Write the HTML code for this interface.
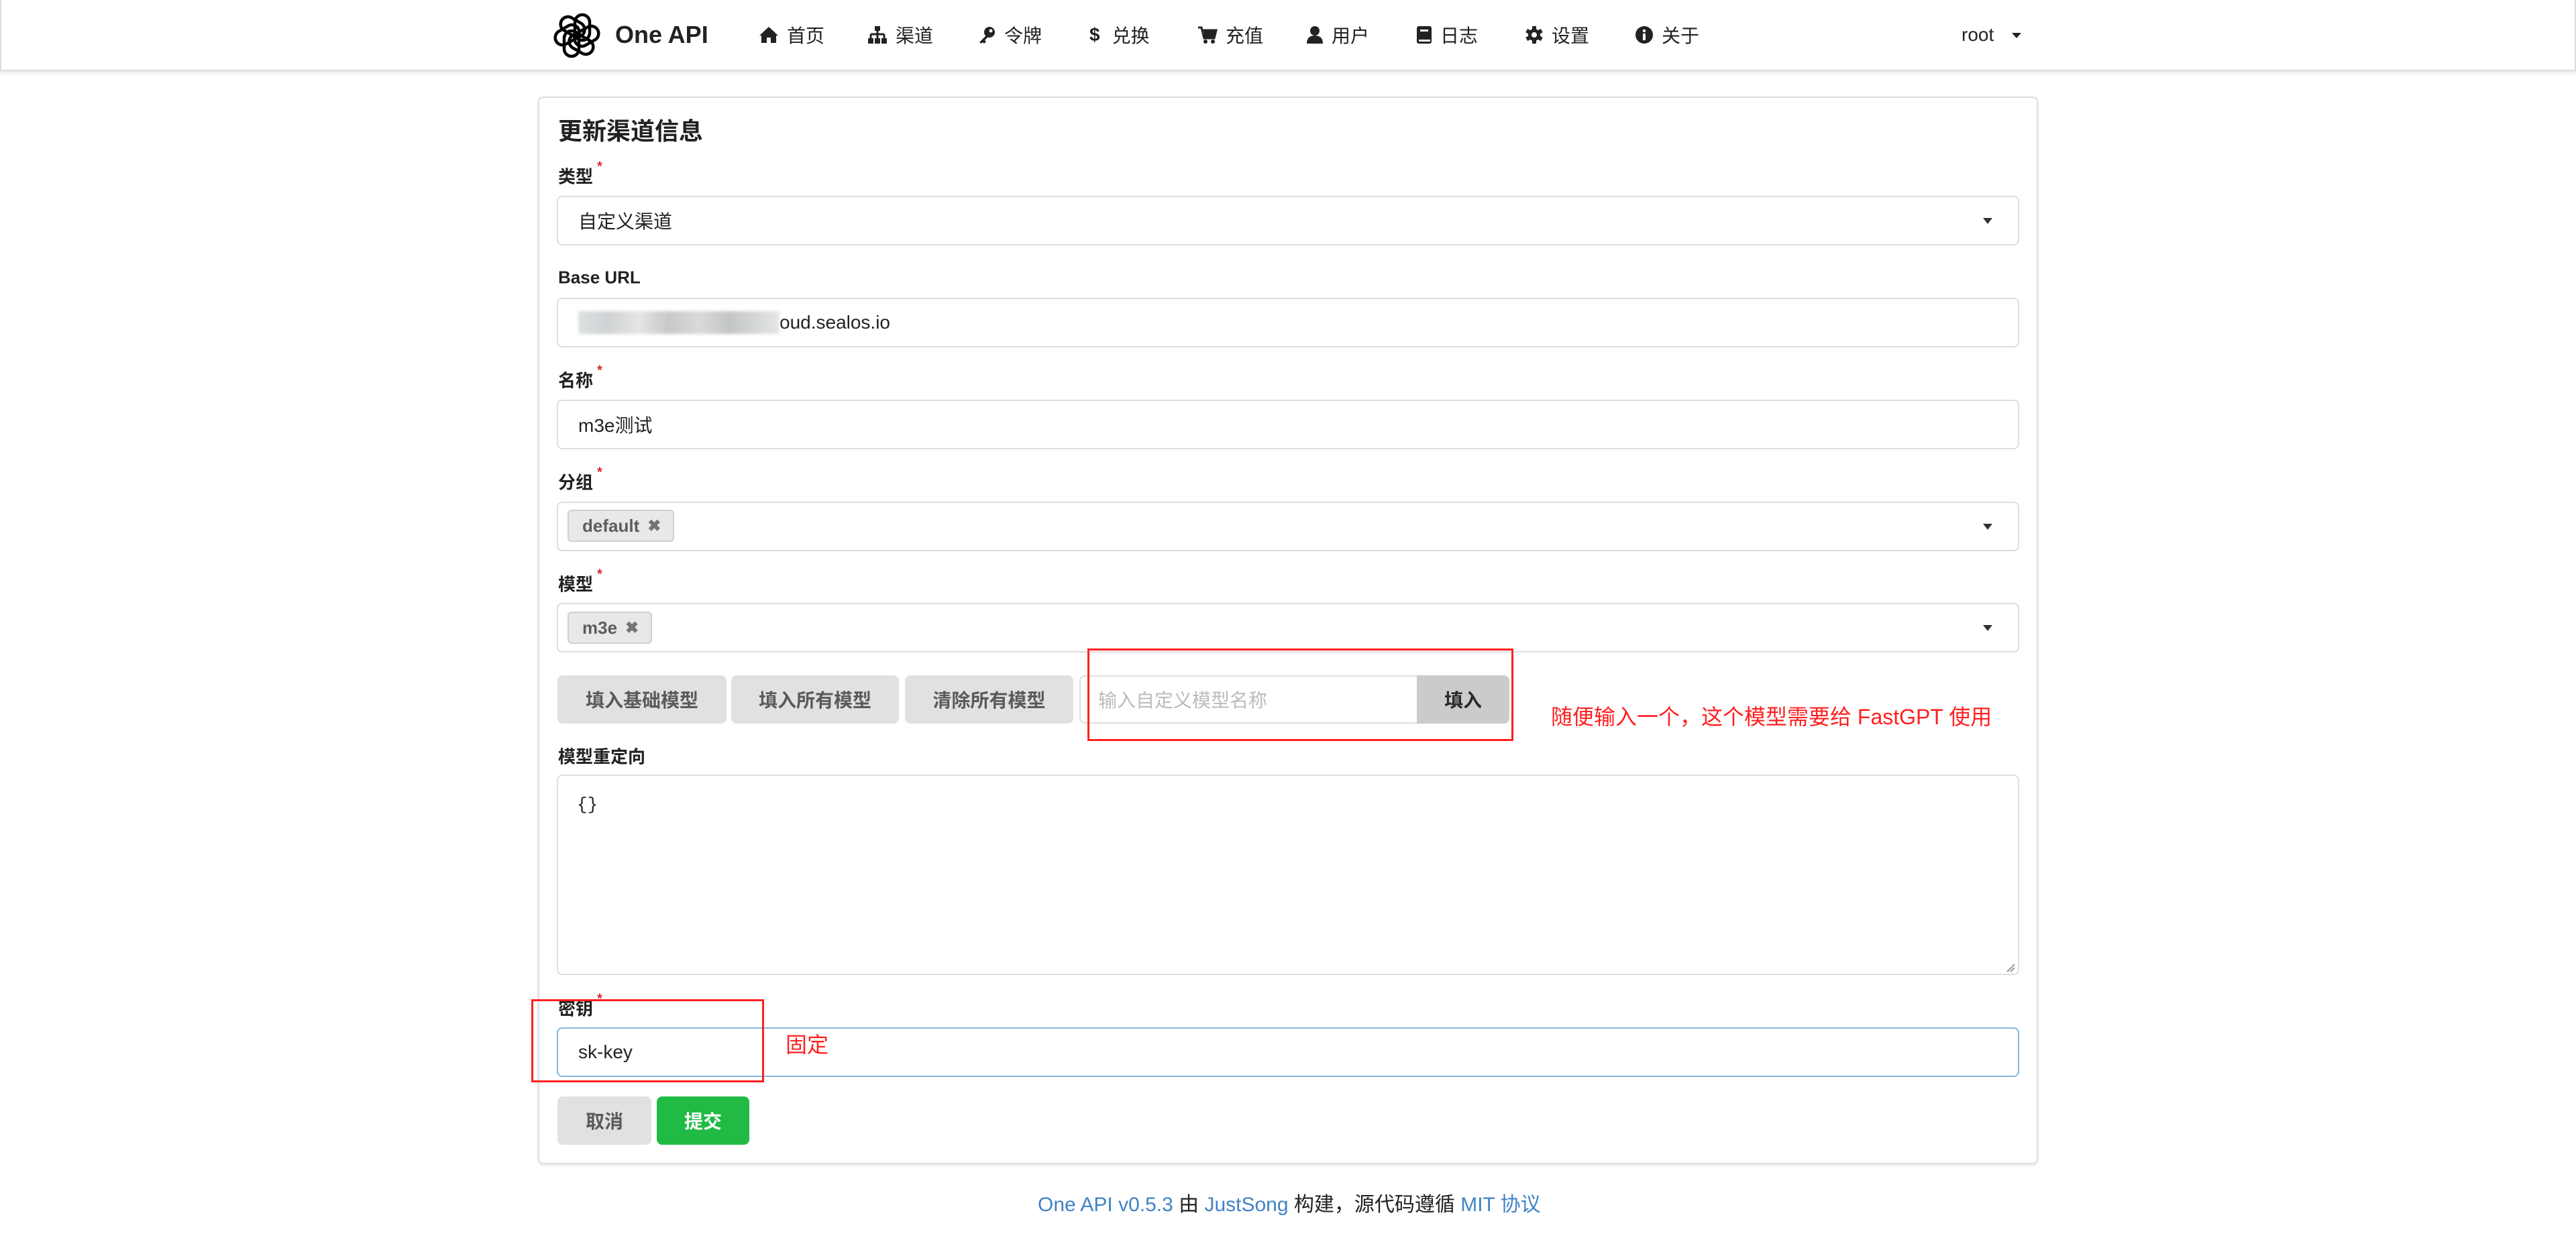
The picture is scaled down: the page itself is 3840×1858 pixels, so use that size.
<!DOCTYPE html>
<html><head><meta charset="utf-8"><style>
*{box-sizing:border-box;margin:0;padding:0}
body{width:3840px;height:1858px;background:#fff;font-family:"Liberation Sans","Noto Sans CJK SC",sans-serif;color:rgba(0,0,0,.87);position:relative;overflow:hidden}
.a{position:absolute}
.hdr{left:0;top:0;width:3840px;height:106px;background:#fff;border:2px solid #dedede;border-top:none;box-shadow:0 2px 6px rgba(34,36,38,.15)}
.nav{top:52px;transform:translateY(-50%);font-size:28px;color:rgba(0,0,0,.87);display:flex;align-items:center;white-space:nowrap}
.nav svg{margin-right:12px}
.card{left:802px;top:144px;width:2236px;height:1592px;border:2px solid #dedede;border-radius:8px;box-shadow:0 2px 4px rgba(34,36,38,.12)}
.lbl{left:832px;font-size:26px;font-weight:bold;transform:translateY(-50%);white-space:nowrap}
.lbl i{color:#db2828;font-style:normal;font-size:20px;vertical-align:top;margin-left:6px;position:relative;top:-6px}
.inp{left:830px;width:2180px;height:74px;border:2px solid rgba(34,36,38,.15);border-radius:8px;background:#fff;font-size:28px;display:flex;align-items:center;padding-left:30px;white-space:nowrap}
.caret{position:absolute;right:38px;top:50%;margin-top:-4px;width:0;height:0;border-left:7px solid transparent;border-right:7px solid transparent;border-top:9px solid rgba(0,0,0,.8)}
.tag{position:absolute;left:14px;height:48px;background:#e8e8e8;border:2px solid #cfcfcf;border-radius:6px;font-size:26px;font-weight:bold;color:rgba(0,0,0,.6);display:flex;align-items:center;padding:0 18px 0 20px}
.tag b{margin-left:12px;font-size:24px;color:rgba(0,0,0,.5)}
.btn{top:1007px;height:72px;background:#e0e1e2;border-radius:8px;font-size:28px;font-weight:bold;color:rgba(0,0,0,.6);display:flex;align-items:center;justify-content:center}
.red{border:3px solid #ff2020}
.rt{color:#ff2020;font-size:32px;white-space:nowrap;transform:translateY(-50%)}
.ft{top:1793px;left:1547px;transform:translateY(-50%);font-size:30px;white-space:nowrap}
.ft span{color:#4183c4}
</style></head><body>
<div class="a hdr"></div>
<svg class="a" style="left:825px;top:18px" width="70" height="70" viewBox="0 0 70 70">
<g fill="none" stroke="#000" stroke-width="4.5">
<g transform="translate(35 35)">
<rect x="-3" y="-31" width="22" height="38" rx="11" transform="rotate(0)"/>
<rect x="-3" y="-31" width="22" height="38" rx="11" transform="rotate(60)"/>
<rect x="-3" y="-31" width="22" height="38" rx="11" transform="rotate(120)"/>
<rect x="-3" y="-31" width="22" height="38" rx="11" transform="rotate(180)"/>
<rect x="-3" y="-31" width="22" height="38" rx="11" transform="rotate(240)"/>
<rect x="-3" y="-31" width="22" height="38" rx="11" transform="rotate(300)"/>
</g></g></svg>
<div class="a" style="left:917px;top:52px;transform:translateY(-50%);font-size:36px;font-weight:bold;color:#222">One API</div>

<div class="a nav" style="left:1131px"><svg width="30" height="28" viewBox="0 0 30 28"><path d="M15 2 L1 15 L4 15 L4 26 L12 26 L12 18 L18 18 L18 26 L26 26 L26 15 L29 15 Z" fill="#222"/></svg>首页</div>
<div class="a nav" style="left:1293px"><svg width="30" height="28" viewBox="0 0 30 28"><rect x="11" y="1" width="8" height="7" fill="#222"/><path d="M15 8v5M5 13h20M5 13v6M15 13v6M25 13v6" stroke="#222" stroke-width="3" fill="none"/><rect x="1" y="19" width="8" height="8" fill="#222"/><rect x="11" y="19" width="8" height="8" fill="#222"/><rect x="21" y="19" width="8" height="8" fill="#222"/></svg>渠道</div>
<div class="a nav" style="left:1457px"><svg width="28" height="28" viewBox="0 0 28 28"><circle cx="18" cy="10" r="8" fill="#222"/><path d="M13 15 L3 25 L6 27 L8 25 L10 27 L13 24 L11 22 L16 17Z" fill="#222"/><circle cx="20" cy="8" r="2.5" fill="#fff"/></svg>令牌</div>
<div class="a nav" style="left:1624px"><span style="font-weight:bold;margin-right:18px">$</span>兑换</div>
<div class="a nav" style="left:1785px"><svg width="30" height="28" viewBox="0 0 30 28"><path d="M1 3h5l4 16h15l3-12H8" fill="none" stroke="#222" stroke-width="3"/><path d="M9 7h19l-3 12H11Z" fill="#222"/><circle cx="12" cy="24" r="3" fill="#222"/><circle cx="23" cy="24" r="3" fill="#222"/></svg>充值</div>
<div class="a nav" style="left:1947px"><svg width="26" height="28" viewBox="0 0 26 28"><circle cx="13" cy="8" r="7" fill="#222"/><path d="M1 27 Q1 15 13 15 Q25 15 25 27Z" fill="#222"/></svg>用户</div>
<div class="a nav" style="left:2111px"><svg width="24" height="28" viewBox="0 0 24 28"><rect x="1" y="1" width="22" height="26" rx="3" fill="#222"/><rect x="6" y="6" width="12" height="3" fill="#fff"/><rect x="4" y="21" width="17" height="3" fill="#fff"/></svg>日志</div>
<div class="a nav" style="left:2273px"><svg width="28" height="28" viewBox="0 0 28 28"><g fill="#222"><circle cx="14" cy="14" r="9"/><rect x="11" y="1" width="6" height="26"/><rect x="11" y="1" width="6" height="26" transform="rotate(60 14 14)"/><rect x="11" y="1" width="6" height="26" transform="rotate(120 14 14)"/></g><circle cx="14" cy="14" r="4" fill="#fff"/></svg>设置</div>
<div class="a nav" style="left:2437px"><svg width="28" height="28" viewBox="0 0 28 28"><circle cx="14" cy="14" r="13" fill="#222"/><rect x="12" y="12" width="4" height="10" fill="#fff"/><circle cx="14" cy="8" r="2.2" fill="#fff"/></svg>关于</div>
<div class="a nav" style="left:2924px">root</div>
<div class="a" style="left:2999px;top:49px;border-left:7px solid transparent;border-right:7px solid transparent;border-top:8px solid #222"></div>

<div class="a card"></div>
<div class="a" style="left:832px;top:193px;transform:translateY(-50%);font-size:36px;font-weight:bold;white-space:nowrap">更新渠道信息</div>

<div class="a lbl" style="top:262px">类型<i>*</i></div>
<div class="a inp" style="top:292px">自定义渠道<span class="caret"></span></div>

<div class="a lbl" style="top:414px">Base URL</div>
<div class="a inp" style="top:444px"><span style="display:inline-block;width:300px;height:34px;background:linear-gradient(90deg,#d5dad8,#c4c8cb 15%,#e2dede 30%,#b9bbbd 45%,#d4d0d0 60%,#b5b9b6 75%,#dfe1df);filter:blur(2px);opacity:.8;margin-left:0"></span>oud.sealos.io</div>

<div class="a lbl" style="top:566px">名称<i>*</i></div>
<div class="a inp" style="top:596px">m3e测试</div>

<div class="a lbl" style="top:718px">分组<i>*</i></div>
<div class="a inp" style="top:748px"><span class="tag" style="top:10px">default<b>✖</b></span><span class="caret"></span></div>

<div class="a lbl" style="top:870px">模型<i>*</i></div>
<div class="a inp" style="top:899px"><span class="tag" style="top:11px">m3e<b>✖</b></span><span class="caret"></span></div>

<div class="a btn" style="left:831px;width:252px">填入基础模型</div>
<div class="a btn" style="left:1090px;width:250px">填入所有模型</div>
<div class="a btn" style="left:1349px;width:251px">清除所有模型</div>
<div class="a" style="left:1609px;top:1007px;width:520px;height:72px;border:2px solid rgba(34,36,38,.15);border-right:none;border-radius:8px 0 0 8px;font-size:28px;color:#bbb;display:flex;align-items:center;padding-left:26px">输入自定义模型名称</div>
<div class="a btn" style="left:2112px;width:138px;background:#cacbcd;border-radius:0 8px 8px 0;color:rgba(0,0,0,.8)">填入</div>
<div class="a red" style="left:1621px;top:967px;width:635px;height:138px"></div>
<div class="a rt" style="left:2312px;top:1067px">随便输入一个，这个模型需要给 FastGPT 使用</div>

<div class="a lbl" style="top:1127px">模型重定向</div>
<div class="a" style="left:830px;top:1155px;width:2180px;height:299px;border:2px solid rgba(34,36,38,.15);border-radius:8px;font-family:'Liberation Mono',monospace;font-size:26px;padding:28px 0 0 28px">{}</div>
<svg class="a" style="left:2990px;top:1436px" width="14" height="14"><path d="M2 13L13 2M7 13L13 7" stroke="#999" stroke-width="2"/></svg>

<div class="a lbl" style="top:1503px">密钥<i>*</i></div>
<div class="a inp" style="top:1532px;border-color:#85b7d9">sk-key</div>
<div class="a red" style="left:792px;top:1490px;width:347px;height:124px"></div>
<div class="a rt" style="left:1171px;top:1556px">固定</div>

<div class="a btn" style="left:831px;top:1635px;width:140px">取消</div>
<div class="a btn" style="left:979px;top:1635px;width:138px;background:#21ba45;color:#fff">提交</div>

<div class="a ft"><span>One API v0.5.3</span> 由 <span>JustSong</span> 构建，源代码遵循 <span>MIT 协议</span></div>
</body></html>
